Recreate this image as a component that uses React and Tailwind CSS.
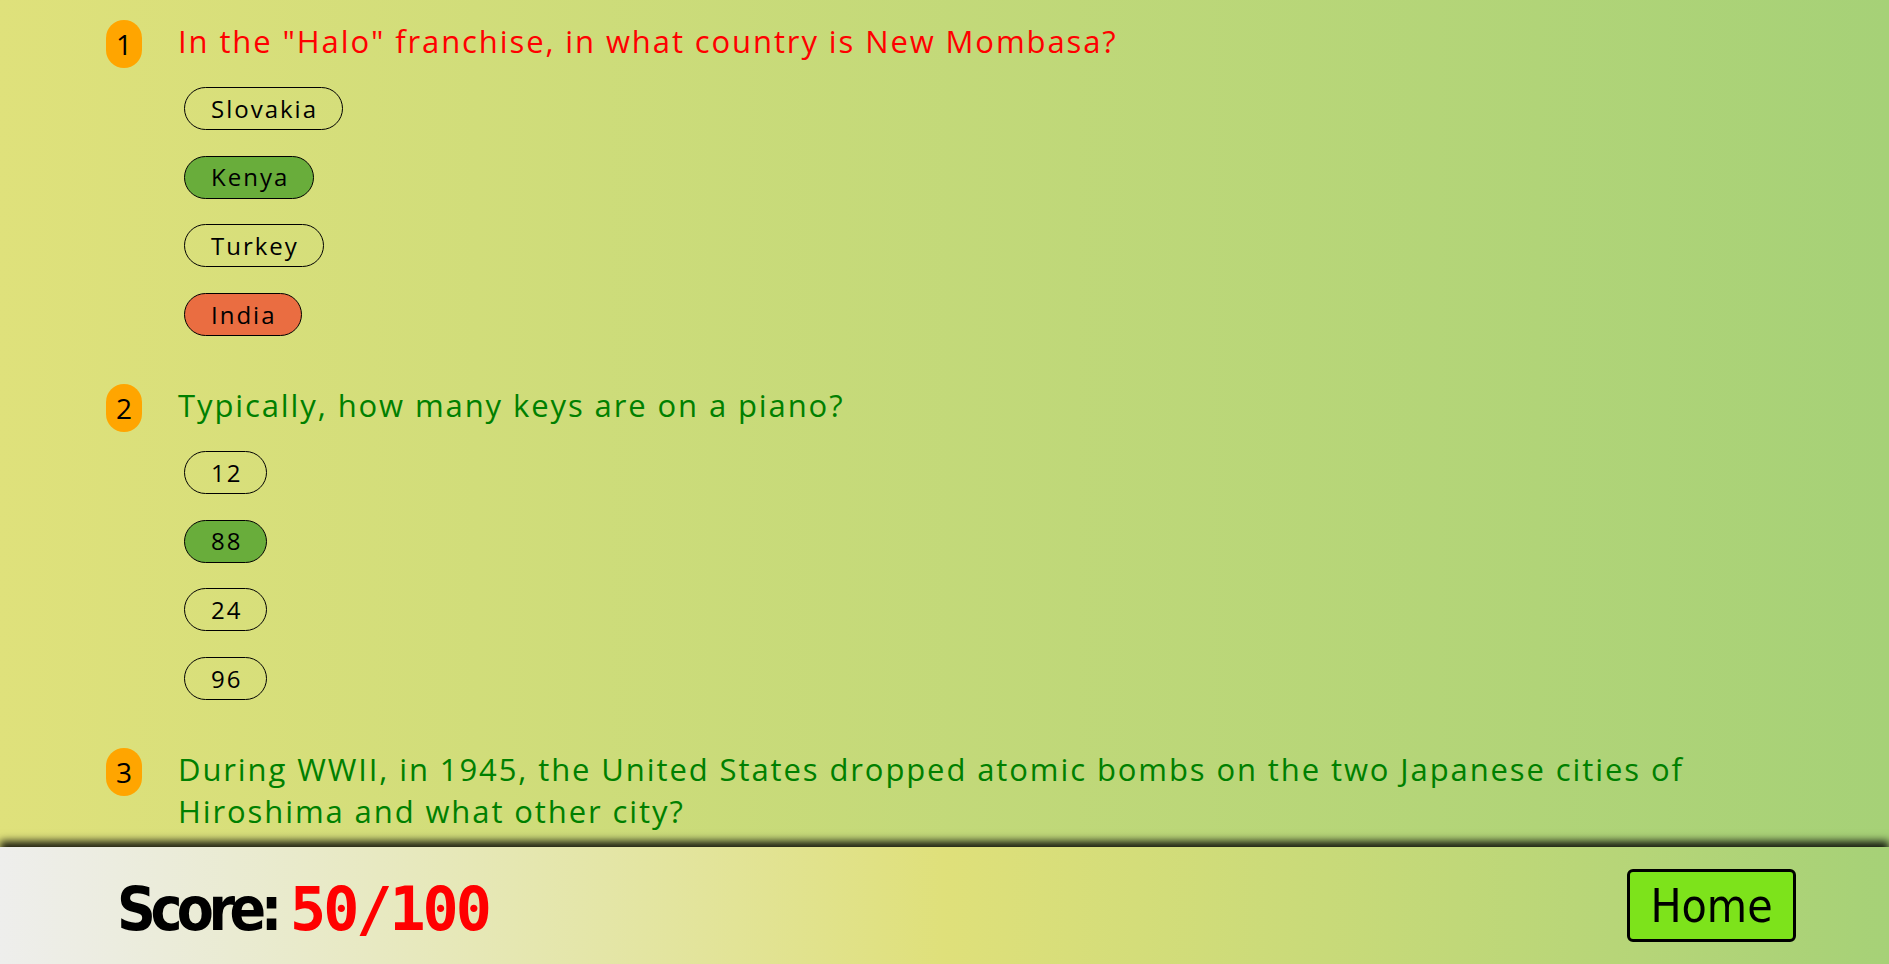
import React from 'react';

const questions = [
    {
        n: 1,
        text: 'In the "Halo" franchise, in what country is New Mombasa?',
        correct: false,
        options: [
            { label: 'Slovakia' },
            { label: 'Kenya', state: 'right' },
            { label: 'Turkey' },
            { label: 'India', state: 'wrong' },
        ],
    },
    {
        n: 2,
        text: 'Typically, how many keys are on a piano?',
        correct: true,
        options: [
            { label: '12' },
            { label: '88', state: 'right' },
            { label: '24' },
            { label: '96' },
        ],
    },
    {
        n: 3,
        text: 'During WWII, in 1945, the United States dropped atomic bombs on the two Japanese cities of Hiroshima and what other city?',
        correct: true,
        options: [
            { label: 'Kyoto' },
            { label: 'Nagasaki', state: 'right' },
            { label: 'Tokyo' },
            { label: 'Osaka' },
        ],
    },
];

const Option = ({ label, state }) => {
    const bg = state === 'right' ? 'bg-[#69ad3b]' : state === 'wrong' ? 'bg-[#ea6d41]' : 'bg-transparent';
    return (
        <button className={`h-[43px] pl-[26px] pr-[24px] rounded-full border border-black text-[24px] tracking-[2px] text-black leading-none ${bg}`}>
            {label}
        </button>
    );
};

const Question = ({ n, text, correct, options }) => (
    <section className="mb-[48px]">
        <div className="flex items-start">
            <div className="w-[72px] shrink-0">
                <span className="inline-flex items-center justify-center h-[48px] min-w-[36px] px-[10px] rounded-full bg-[#ffa500] text-[28px] text-black">
                    {n}
                </span>
            </div>
            <h2 className={`text-[31px] leading-[42px] tracking-[1.9px] max-w-[1560px] ${correct ? 'text-[#008000]' : 'text-[#ff0000]'}`}>
                {text}
            </h2>
        </div>
        <div className="flex flex-col items-start gap-[25.7px] mt-[19px] ml-[6px] pl-[72px]">
            {options.map((o) => (
                <Option key={o.label} {...o} />
            ))}
        </div>
    </section>
);

export default function App() {
    return (
        <div className="min-h-screen bg-linear-to-r from-[#dfe17b] to-[#a6d177] font-['Open_Sans',sans-serif]">
            {/* Questions */}
            <main className="pl-[106px] pt-[20px] pb-[140px]">
                {questions.map((q) => (
                    <Question key={q.n} {...q} />
                ))}
            </main>

            {/* Score bar */}
            <footer className="fixed bottom-0 left-0 right-0 h-[117px] flex items-center justify-between pl-[117px] pr-[93px] bg-linear-to-r from-[#eeeeec] via-[#dfe07a] to-[#a6d177] shadow-[0_-6px_8px_rgba(0,0,0,0.85)]">
                <p className="text-[60px] font-bold leading-none pt-[4px]">
                    <span className="font-['DejaVu_Sans',sans-serif] font-stretch-condensed tracking-[-5.5px] text-black">Score: </span>
                    <span className="font-['DejaVu_Sans_Mono',monospace] text-[#ff0000] tracking-[-3px]">50/100</span>
                </p>
                <button className="w-[169px] h-[73px] rounded-[6px] border-[3px] border-black bg-[#7de31b] text-[46px] leading-none text-black font-['DejaVu_Sans',sans-serif] font-stretch-condensed">
                    Home
                </button>
            </footer>
        </div>
    );
}
